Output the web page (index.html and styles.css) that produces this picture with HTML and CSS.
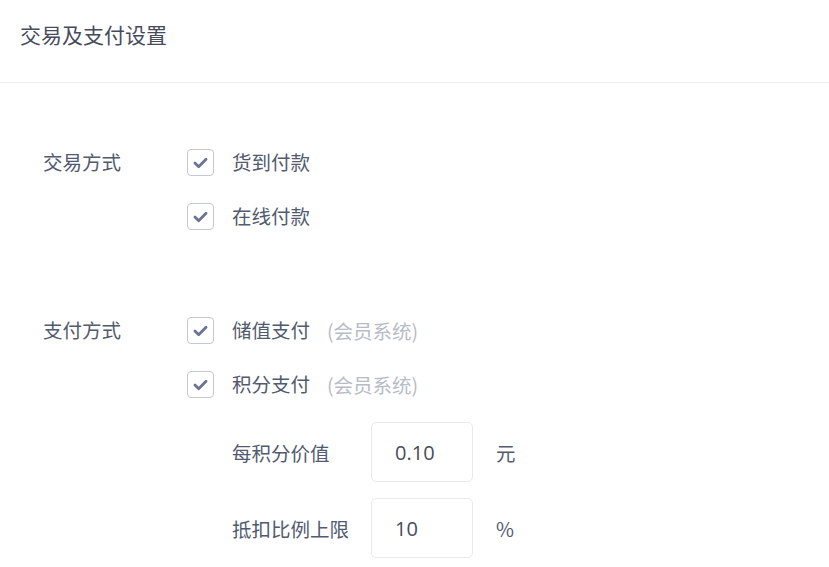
FILE: index.html
```html
<!DOCTYPE html>
<html lang="zh-CN">
<head>
<meta charset="utf-8">
<link rel="stylesheet" href="styles.css">
</head>
<body>
<div class="page">
  <div class="header">交易及支付设置</div>
  <div class="content">
    <div class="section">
      <div class="label">交易方式</div>
      <div class="options">
        <div class="option">
          <span class="checkbox"><svg width="27" height="27" viewBox="0 0 27 27"><polyline points="7.5,14 11.5,18 19.5,10" fill="none" stroke="#6b7396" stroke-width="3" stroke-linecap="round" stroke-linejoin="round"/></svg></span>
          <span class="opt-text">货到付款</span>
        </div>
        <div class="option">
          <span class="checkbox"><svg width="27" height="27" viewBox="0 0 27 27"><polyline points="7.5,14 11.5,18 19.5,10" fill="none" stroke="#6b7396" stroke-width="3" stroke-linecap="round" stroke-linejoin="round"/></svg></span>
          <span class="opt-text">在线付款</span>
        </div>
      </div>
    </div>
    <div class="section second">
      <div class="label">支付方式</div>
      <div class="options">
        <div class="option">
          <span class="checkbox"><svg width="27" height="27" viewBox="0 0 27 27"><polyline points="7.5,14 11.5,18 19.5,10" fill="none" stroke="#6b7396" stroke-width="3" stroke-linecap="round" stroke-linejoin="round"/></svg></span>
          <span class="opt-text">储值支付</span><span class="hint">(会员系统)</span>
        </div>
        <div class="option">
          <span class="checkbox"><svg width="27" height="27" viewBox="0 0 27 27"><polyline points="7.5,14 11.5,18 19.5,10" fill="none" stroke="#6b7396" stroke-width="3" stroke-linecap="round" stroke-linejoin="round"/></svg></span>
          <span class="opt-text">积分支付</span><span class="hint">(会员系统)</span>
        </div>
        <div class="sub">
          <div class="sub-row first">
            <span class="sub-label">每积分价值</span>
            <span class="input">0.10</span>
            <span class="unit">元</span>
          </div>
          <div class="sub-row">
            <span class="sub-label">抵扣比例上限</span>
            <span class="input">10</span>
            <span class="unit">%</span>
          </div>
        </div>
      </div>
    </div>
  </div>
</div>
</body>
</html>
```
FILE: styles.css
```css
* { box-sizing: border-box; }
html, body { margin: 0; padding: 0; background: #fff; }
body {
  font-family: "Noto Sans CJK SC", "Noto Sans", "Liberation Sans", sans-serif;
  color: #515a6e;
  width: 829px;
  height: 567px;
  overflow: hidden;
}
.header {
  height: 83px;
  padding-left: 20px;
  padding-top: 20px;
  font-size: 21px;
  line-height: 28px;
  color: #464c5b;
  border-bottom: 1px solid #ebedf0;
}
.content { padding-top: 65px; }
.section { display: flex; }
.section.second { margin-top: 86px; }
.label {
  width: 187px;
  padding-left: 43px;
  font-size: 19.5px;
  line-height: 28px;
  height: 28px;
}
.options { display: flex; flex-direction: column; gap: 26px; }
.option { display: flex; align-items: center; height: 28px; font-size: 19.5px; }
.checkbox {
  width: 27px;
  height: 27px;
  border: 1px solid #c3c7d6;
  border-radius: 4px;
  display: flex;
  align-items: center;
  justify-content: center;
  flex: none;
}
.checkbox svg { display: block; }
.opt-text { margin-left: 18px; line-height: 28px; }
.hint { margin-left: 17px; color: #b8bcc6; }
.sub { margin-left: 45px; margin-top: -2px; display: flex; flex-direction: column; gap: 16px; }
.sub-row { display: flex; align-items: center; font-size: 19.5px; }
.sub-label { width: 139px; }
.input {
  width: 102px;
  height: 60px;
  border: 1px solid #e8eaee;
  border-radius: 5px;
  padding-left: 23px;
  display: flex;
  align-items: center;
  font-family: "Open Sans", "Liberation Sans", sans-serif;
  font-size: 20px;
  color: #464c5b;
}
.unit { margin-left: 23px; }
```
